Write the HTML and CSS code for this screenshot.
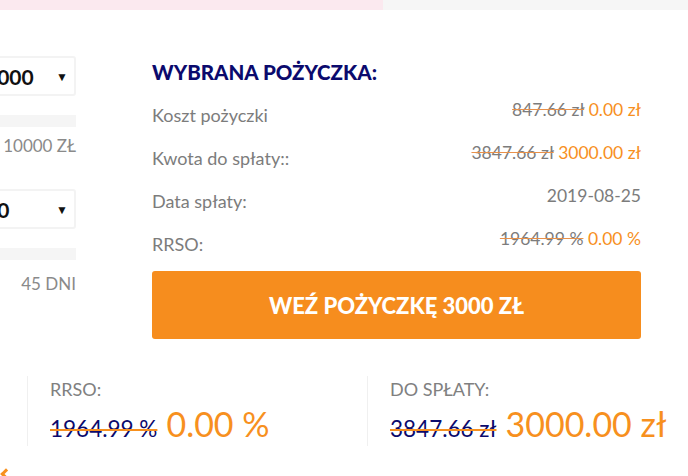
FILE: index.html
```html
<!DOCTYPE html>
<html lang="pl">
<head>
    <meta charset="UTF-8">
    <meta name="viewport" content="width=device-width, initial-scale=1.0">
    <title>Pożyczka - kalkulator</title>
    <link rel="stylesheet" href="styles.css">
</head>
<body>
    <div class="top-strip">
        <div class="top-strip-pink"></div>
    </div>

    <div class="main">
        <div class="calc">
            <div class="select-box">
                <span class="select-value">3000</span>
                <span class="select-arrow">▼</span>
            </div>
            <div class="track"></div>
            <div class="range-label">10000 ZŁ</div>

            <div class="select-box select-second">
                <span class="select-value">30</span>
                <span class="select-arrow">▼</span>
            </div>
            <div class="track"></div>
            <div class="range-label range-days">45 DNI</div>
        </div>

        <div class="summary">
            <h2 class="summary-title">WYBRANA POŻYCZKA:</h2>

            <div class="summary-row">
                <span class="row-label">Koszt pożyczki</span>
                <span class="row-value"><s>847.66 zł</s> <em>0.00 zł</em></span>
            </div>
            <div class="summary-row">
                <span class="row-label">Kwota do spłaty::</span>
                <span class="row-value"><s>3847.66 zł</s> <em>3000.00 zł</em></span>
            </div>
            <div class="summary-row">
                <span class="row-label">Data spłaty:</span>
                <span class="row-value">2019-08-25</span>
            </div>
            <div class="summary-row">
                <span class="row-label">RRSO:</span>
                <span class="row-value"><s>1964.99 %</s> <em>0.00 %</em></span>
            </div>

            <button class="take-btn">WEŹ POŻYCZKĘ 3000 ZŁ</button>
        </div>
    </div>

    <div class="totals">
        <div class="total-item">
            <div class="total-label">RRSO:</div>
            <div class="total-values"><s>1964.99 %</s> <span class="total-big">0.00 %</span></div>
        </div>
        <div class="total-item">
            <div class="total-label">DO SPŁATY:</div>
            <div class="total-values"><s>3847.66 zł</s> <span class="total-big">3000.00 zł</span></div>
        </div>
    </div>

    <div class="corner-mark"></div>
</body>
</html>
```

FILE: styles.css
```css
* {
    margin: 0;
    padding: 0;
    box-sizing: border-box;
}

body {
    font-family: Lato, 'Open Sans', sans-serif;
    background: white;
    width: 688px;
    height: 476px;
    overflow: hidden;
}

.top-strip {
    height: 10px;
    background: #f6f6f6;
}

.top-strip-pink {
    width: 383px;
    height: 100%;
    background: #fbe9ef;
}

.main {
    display: flex;
}

/* lewa kolumna - kalkulator (ucięta) */
.calc {
    flex-shrink: 0;
    width: 110px;
    margin-left: -34px;
    padding-top: 46px;
}

.select-box {
    display: flex;
    align-items: center;
    justify-content: space-between;
    height: 40px;
    border: 2px solid #f3f3f3;
    border-radius: 3px;
    padding: 0 6px 0 17px;
}

.select-second {
    margin-top: 33px;
}

.select-value {
    font-size: 21px;
    font-weight: 700;
    color: #111;
}

.select-arrow {
    font-size: 12px;
    color: #111;
}

.track {
    height: 12px;
    margin-top: 19px;
    background: #f5f5f5;
}

.range-label {
    margin-top: 9px;
    text-align: right;
    font-size: 17px;
    color: #8a8a8a;
    line-height: 20px;
}

.range-days {
    margin-top: 14px;
}

/* prawa kolumna - podsumowanie */
.summary {
    flex-shrink: 0;
    width: 489px;
    margin-left: 76px;
    padding-top: 51px;
}

.summary-title {
    font-size: 20.5px;
    font-weight: 900;
    line-height: 22px;
    color: #0b0a6d;
    margin-bottom: 14px;
}

.summary-row {
    display: flex;
    justify-content: space-between;
    align-items: flex-start;
    height: 43px;
}

.row-label {
    padding-top: 8px;
    font-size: 18px;
    line-height: 20px;
    color: #7c7c7c;
}

.row-value {
    padding-top: 3px;
    font-size: 17.5px;
    line-height: 20px;
    color: #7c7c7c;
}

.row-value s {
    text-decoration-color: #e8914a;
}

.row-value em {
    font-style: normal;
    color: #f7901e;
}

.take-btn {
    display: block;
    width: 100%;
    height: 68px;
    margin-top: 2px;
    background: #f68d1e;
    color: white;
    border: none;
    border-radius: 3px;
    font-family: inherit;
    font-size: 22px;
    font-weight: 900;
    cursor: pointer;
}

/* dolny pasek z sumami */
.totals {
    display: flex;
    margin-top: 37px;
    padding-left: 27px;
}

.total-item {
    flex-shrink: 0;
    width: 340px;
    height: 70px;
    border-left: 1px solid #f0f0f0;
    padding: 3px 0 0 22px;
}

.total-label {
    font-size: 18px;
    line-height: 20px;
    color: #808080;
}

.total-values {
    display: flex;
    align-items: baseline;
    gap: 9px;
    margin-top: 4px;
}

.total-values s {
    font-size: 22.5px;
    color: #0b0a6d;
    text-decoration-color: #f7901e;
    text-decoration-thickness: 2px;
}

.total-big {
    font-size: 34px;
    color: #f7901e;
}

.corner-mark {
    position: absolute;
    left: 2px;
    top: 470px;
    width: 8px;
    height: 8px;
    border-left: 3px solid #f7901e;
    border-bottom: 3px solid #f7901e;
    transform: rotate(45deg);
}
```
